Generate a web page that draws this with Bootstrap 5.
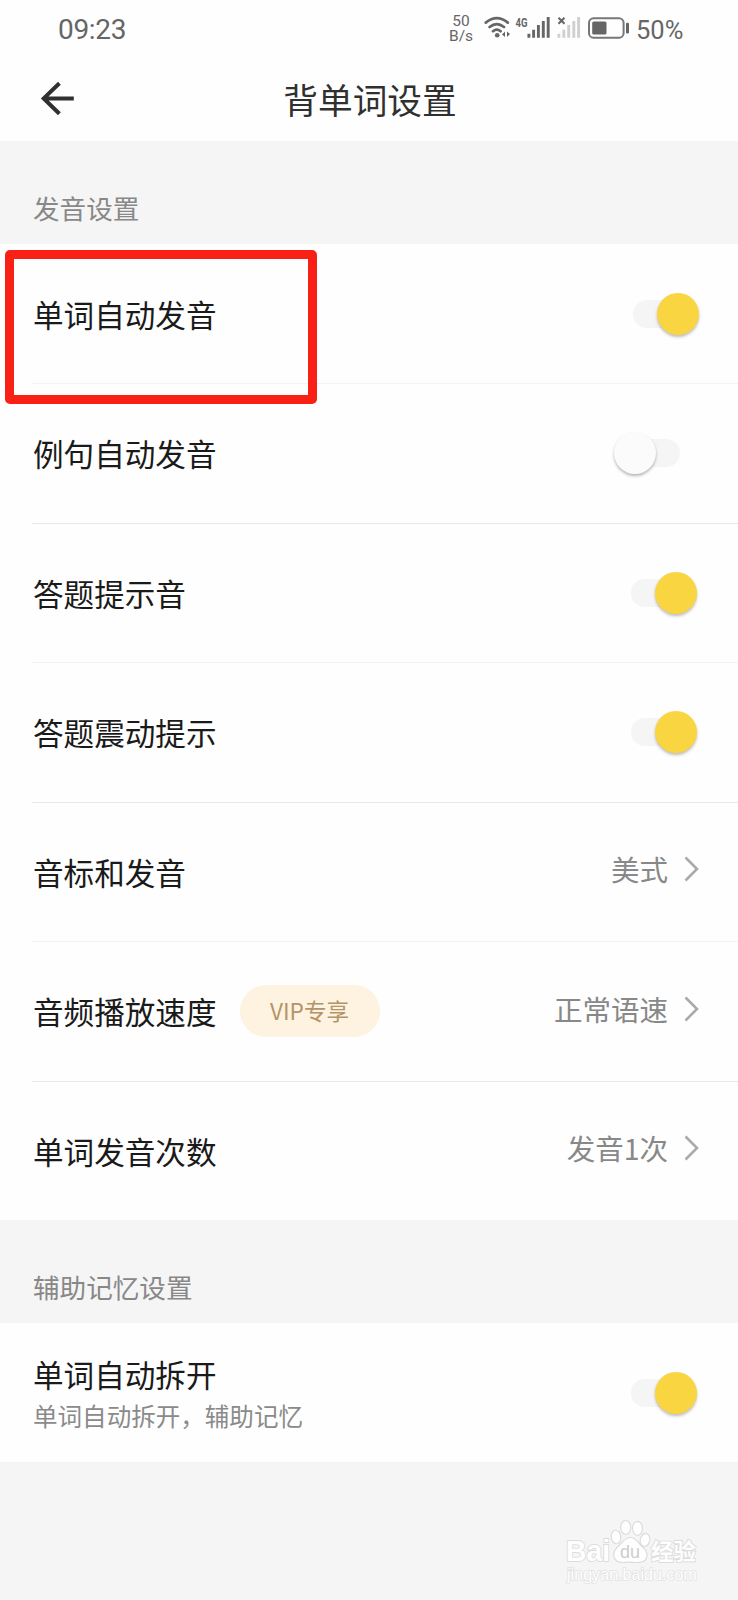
<!DOCTYPE html>
<html lang="zh-CN">
<head>
<meta charset="utf-8">
<meta name="viewport" content="width=device-width, initial-scale=1">
<title>背单词设置</title>
<link rel="stylesheet" href="https://cdn.jsdelivr.net/npm/bootstrap@5.3.0/dist/css/bootstrap.min.css">
<style>
body{background:#f5f5f5;font-family:"Noto Sans CJK SC","Noto Sans",sans-serif;overflow:hidden}
.screen{width:738px;height:1600px}
.top-area{height:141px;background:#fefefe}
.status-bar{height:60px;padding:0 55px 0 58px;color:#666;font-family:Roboto,sans-serif}
.clock{font-size:28px;line-height:60px;letter-spacing:-.3px}
.net-speed{font-size:15.5px;line-height:15px;width:26px;margin:0 10px 3px 0}
.status-icons{margin-bottom:8px}
.power{font-size:25.5px;line-height:58px;width:48px;margin-left:1px;margin-right:-1px}
.title-bar{height:81px}
.title-bar h1{font-size:34.7px;line-height:50px;color:#303030;margin:-3px 0 0 2px}
.back-btn{left:40px;top:20px;line-height:0}
.group-head{height:102.5px;padding:52px 32px 0 33px;font-size:26.6px;line-height:30px;color:#888}
.setting{--bs-list-group-bg:#fefefe;height:139.5px;margin:0;padding:1px 39px 0 0;border:0;background:#fefefe;color:#1a1a1a;font-size:30.6px;line-height:42px}
.setting-list{background:#fefefe;padding-left:33px}
.setting + .setting::before{content:"";position:absolute;left:-1px;right:0;top:0;height:1px;background:#e9e9e9}
.setting:nth-child(even)::before{background:#f3f3f3 !important}
.choice{color:#888;font-size:28.5px;margin-top:-5px}
.choice svg{margin-left:16px}
.sub-text{color:#8a8a8a;font-size:24.55px}
.vip{margin-left:23px;width:140px;height:52px;background:#fef3e0;color:#b39468;font-size:22.6px;font-weight:400}
.toggle{width:63px;height:42px;margin-right:2px}
.toggle::before{content:"";position:absolute;left:-3px;width:50px;top:7px;height:28px;border-radius:14px;background:#f5f5f5}
.toggle::after{content:"";position:absolute;right:0;top:0;width:42px;height:42px;border-radius:50%;background:#f9d641;box-shadow:0 2px 3px rgba(90,70,70,.36)}
.toggle.nudge{margin-right:0}
.toggle.is-off{width:67px;margin-right:18px}
.toggle.is-off::before{left:16px}
.toggle.is-off::after{left:0;background:#fbfbfb;box-shadow:0 2px 3px rgba(0,0,0,.28)}
.highlight-frame{left:5px;top:250px;width:312px;height:154px;border:9px solid #f92015;border-radius:5px;z-index:3}
.watermark{padding:54px 35px 0 0}
</style>
</head>
<body>
<div class="screen position-relative d-flex flex-column">
  <header class="top-area">
    <div class="status-bar d-flex align-items-center">
      <span class="clock me-auto">09:23</span>
      <span class="net-speed text-center">50<br>B/s</span>
      <svg class="status-icons" width="151" height="32" viewBox="484 10 151 32" fill="none" stroke="#666" aria-hidden="true">
        <g stroke-width="2.7" stroke-linecap="round">
          <path d="M485.8 22.6Q496.8 13.6 507.8 22.6M489.6 27Q496.8 21.2 504 27M493 31.2Q496.8 28 500.6 31.2"/>
        </g>
        <circle cx="497.2" cy="35.3" r="2.3" fill="#666" stroke="none"/>
        <path d="M505 31.5V37l-3-2.6zM507 31.5V37l3-3z" fill="#666" stroke="none"/>
        <text x="515.6" y="26.5" textLength="12" lengthAdjust="spacingAndGlyphs" font-size="13" font-weight="700" fill="#666" stroke="none">4G</text>
        <g stroke-width="2.9">
          <path d="M528.9 37.7v-4M533.6 37.7v-8M538.4 37.7V25M543.3 37.7V21M548.2 37.7V17"/>
          <path stroke="#d0d0d0" d="M558.9 37.7v-4M563.8 37.7v-8M568.7 37.7V25M573.8 37.7V21M578.6 37.7V17"/>
        </g>
        <path stroke-width="2" d="M558.5 17.7l6 6M564.5 17.7l-6 6"/>
        <rect x="589" y="18.3" width="34.6" height="19.4" rx="4.5" stroke-width="2" stroke="#777"/>
        <rect x="592.2" y="21.5" width="14.3" height="13" rx="1.5" fill="#666" stroke="none"/>
        <rect x="626" y="22.7" width="3" height="10.8" rx="1.3" fill="#666" stroke="none"/>
      </svg>
      <span class="power">50%</span>
    </div>
    <div class="title-bar position-relative d-flex align-items-center justify-content-center">
      <a href="#" class="back-btn position-absolute" aria-label="返回">
        <svg width="36" height="38" viewBox="40 80 36 38" fill="none" stroke="#303030" stroke-width="4"><path d="M73.8 98.4H44M59.4 83.2L43.7 98.4L59.4 113.8"/></svg>
      </a>
      <h1 class="fw-normal">背单词设置</h1>
    </div>
  </header>

  <h2 class="group-head fw-normal mb-0">发音设置</h2>
  <div class="setting-list list-group list-group-flush rounded-0">
    <div class="setting list-group-item d-flex align-items-center justify-content-between"><span>单词自动发音</span><span class="toggle nudge position-relative" role="switch" aria-checked="true"></span></div>
    <div class="setting list-group-item d-flex align-items-center justify-content-between"><span>例句自动发音</span><span class="toggle is-off position-relative" role="switch" aria-checked="false"></span></div>
    <div class="setting list-group-item d-flex align-items-center justify-content-between"><span>答题提示音</span><span class="toggle position-relative" role="switch" aria-checked="true"></span></div>
    <div class="setting list-group-item d-flex align-items-center justify-content-between"><span>答题震动提示</span><span class="toggle position-relative" role="switch" aria-checked="true"></span></div>
    <div class="setting list-group-item d-flex align-items-center justify-content-between"><span>音标和发音</span><span class="choice d-flex align-items-center">美式<svg width="15" height="26" fill="none" stroke="#aaa" stroke-width="2.6"><path d="M1.5 1.5L13 13L1.5 24.5"/></svg></span></div>
    <div class="setting list-group-item d-flex align-items-center justify-content-between"><span class="d-flex align-items-center">音频播放速度<span class="vip badge rounded-pill p-0 d-flex align-items-center justify-content-center">VIP专享</span></span><span class="choice d-flex align-items-center">正常语速<svg width="15" height="26" fill="none" stroke="#aaa" stroke-width="2.6"><path d="M1.5 1.5L13 13L1.5 24.5"/></svg></span></div>
    <div class="setting list-group-item d-flex align-items-center justify-content-between"><span>单词发音次数</span><span class="choice d-flex align-items-center">发音1次<svg width="15" height="26" fill="none" stroke="#aaa" stroke-width="2.6"><path d="M1.5 1.5L13 13L1.5 24.5"/></svg></span></div>
  </div>

  <h2 class="group-head fw-normal mb-0">辅助记忆设置</h2>
  <div class="setting-list list-group list-group-flush rounded-0">
    <div class="setting list-group-item d-flex align-items-center justify-content-between">
      <div class="pt-1"><div>单词自动拆开</div><div class="sub-text">单词自动拆开，辅助记忆</div></div>
      <span class="toggle position-relative" role="switch" aria-checked="true"></span>
    </div>
  </div>

  <footer class="watermark d-flex justify-content-end">
    <svg width="140" height="72" viewBox="563 1516 140 72" fill="#fefefe" stroke="#dcdcdc" stroke-width="1.2" font-family="'Liberation Sans','Noto Sans CJK SC',sans-serif">
      <g>
        <ellipse cx="616" cy="1537" rx="4.8" ry="6.8" transform="rotate(-8 616 1537)"/>
        <ellipse cx="625.7" cy="1527.5" rx="5" ry="7"/>
        <ellipse cx="637.5" cy="1528.3" rx="5" ry="7"/>
        <ellipse cx="645" cy="1540" rx="4.8" ry="6.6" transform="rotate(12 645 1540)"/>
        <path d="M630.5 1537.5c6 0 8 6 12.500 10c6 4.500 6 15-5 15c-5 0-10-1-15 0c-11 0-11-10-6-15c5-4 7-10 13.500-10z"/>
      </g>
      <g font-weight="700" paint-order="stroke" stroke-width="1.8">
        <text x="566" y="1561" font-size="30" textLength="44" lengthAdjust="spacingAndGlyphs">Bai</text>
        <text x="620" y="1558" font-size="19" textLength="20" font-weight="400" lengthAdjust="spacingAndGlyphs" fill="#cdcdcd" stroke="none">du</text>
        <text x="651" y="1559.5" font-size="23" textLength="45" lengthAdjust="spacingAndGlyphs">经验</text>
      </g>
      <text x="567" y="1579.5" font-size="17" textLength="130" lengthAdjust="spacingAndGlyphs" paint-order="stroke" stroke="#e2e2e2" stroke-width="1.5">jingyan.baidu.com</text>
    </svg>
  </footer>

  <div class="highlight-frame position-absolute"></div>
</div>
<script src="https://cdn.jsdelivr.net/npm/bootstrap@5.3.0/dist/js/bootstrap.bundle.min.js"></script>
</body>
</html>
